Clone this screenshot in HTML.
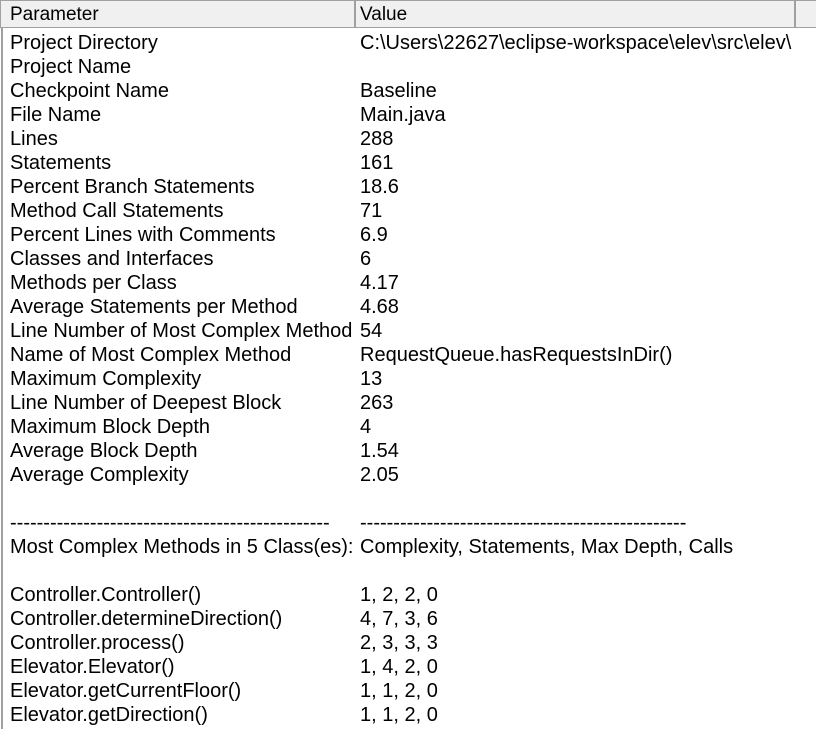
<!DOCTYPE html>
<html><head><meta charset="utf-8"><style>
html,body{margin:0;padding:0;background:#fff;}
body{width:816px;height:729px;overflow:hidden;position:relative;font-family:"Liberation Sans",Arial,sans-serif;font-size:20px;color:#000;}
.hdr{position:absolute;left:0;top:0;width:816px;height:28px;background:#f0f0f0;border-bottom:1px solid #a0a0a0;box-sizing:border-box;border-top:1px solid #a0a0a0;}
.hdr span{position:absolute;top:3px;font-size:19px;}
.sep{position:absolute;top:0;width:2px;height:28px;background:#a0a0a0;}
.lb{position:absolute;left:1px;top:28px;width:2px;height:701px;background:#a0a0a0;}
.rows{position:absolute;left:10px;top:31px;}
.r{height:24px;line-height:24px;white-space:nowrap;position:relative;}
.r .v{position:absolute;left:350px;top:0;}
</style></head><body>
<div class="hdr"><span style="left:10px">Parameter</span><span style="left:360px">Value</span></div>
<div class="sep" style="left:354px"></div><div class="sep" style="left:794px"></div>
<div class="sep" style="left:0px;width:1px"></div>
<div class="lb"></div>
<div class="rows">
<div class="r">Project Directory<span class="v">C:\Users\22627\eclipse-workspace\elev\src\elev\</span></div>
<div class="r">Project Name<span class="v"></span></div>
<div class="r">Checkpoint Name<span class="v">Baseline</span></div>
<div class="r">File Name<span class="v">Main.java</span></div>
<div class="r">Lines<span class="v">288</span></div>
<div class="r">Statements<span class="v">161</span></div>
<div class="r">Percent Branch Statements<span class="v">18.6</span></div>
<div class="r">Method Call Statements<span class="v">71</span></div>
<div class="r">Percent Lines with Comments<span class="v">6.9</span></div>
<div class="r">Classes and Interfaces<span class="v">6</span></div>
<div class="r">Methods per Class<span class="v">4.17</span></div>
<div class="r">Average Statements per Method<span class="v">4.68</span></div>
<div class="r">Line Number of Most Complex Method<span class="v">54</span></div>
<div class="r">Name of Most Complex Method<span class="v">RequestQueue.hasRequestsInDir()</span></div>
<div class="r">Maximum Complexity<span class="v">13</span></div>
<div class="r">Line Number of Deepest Block<span class="v">263</span></div>
<div class="r">Maximum Block Depth<span class="v">4</span></div>
<div class="r">Average Block Depth<span class="v">1.54</span></div>
<div class="r">Average Complexity<span class="v">2.05</span></div>
<div class="r"></div>
<div class="r">------------------------------------------------<span class="v">-------------------------------------------------</span></div>
<div class="r">Most Complex Methods in 5 Class(es):<span class="v">Complexity, Statements, Max Depth, Calls</span></div>
<div class="r"></div>
<div class="r">Controller.Controller()<span class="v">1, 2, 2, 0</span></div>
<div class="r">Controller.determineDirection()<span class="v">4, 7, 3, 6</span></div>
<div class="r">Controller.process()<span class="v">2, 3, 3, 3</span></div>
<div class="r">Elevator.Elevator()<span class="v">1, 4, 2, 0</span></div>
<div class="r">Elevator.getCurrentFloor()<span class="v">1, 1, 2, 0</span></div>
<div class="r">Elevator.getDirection()<span class="v">1, 1, 2, 0</span></div>
</div>
</body></html>
